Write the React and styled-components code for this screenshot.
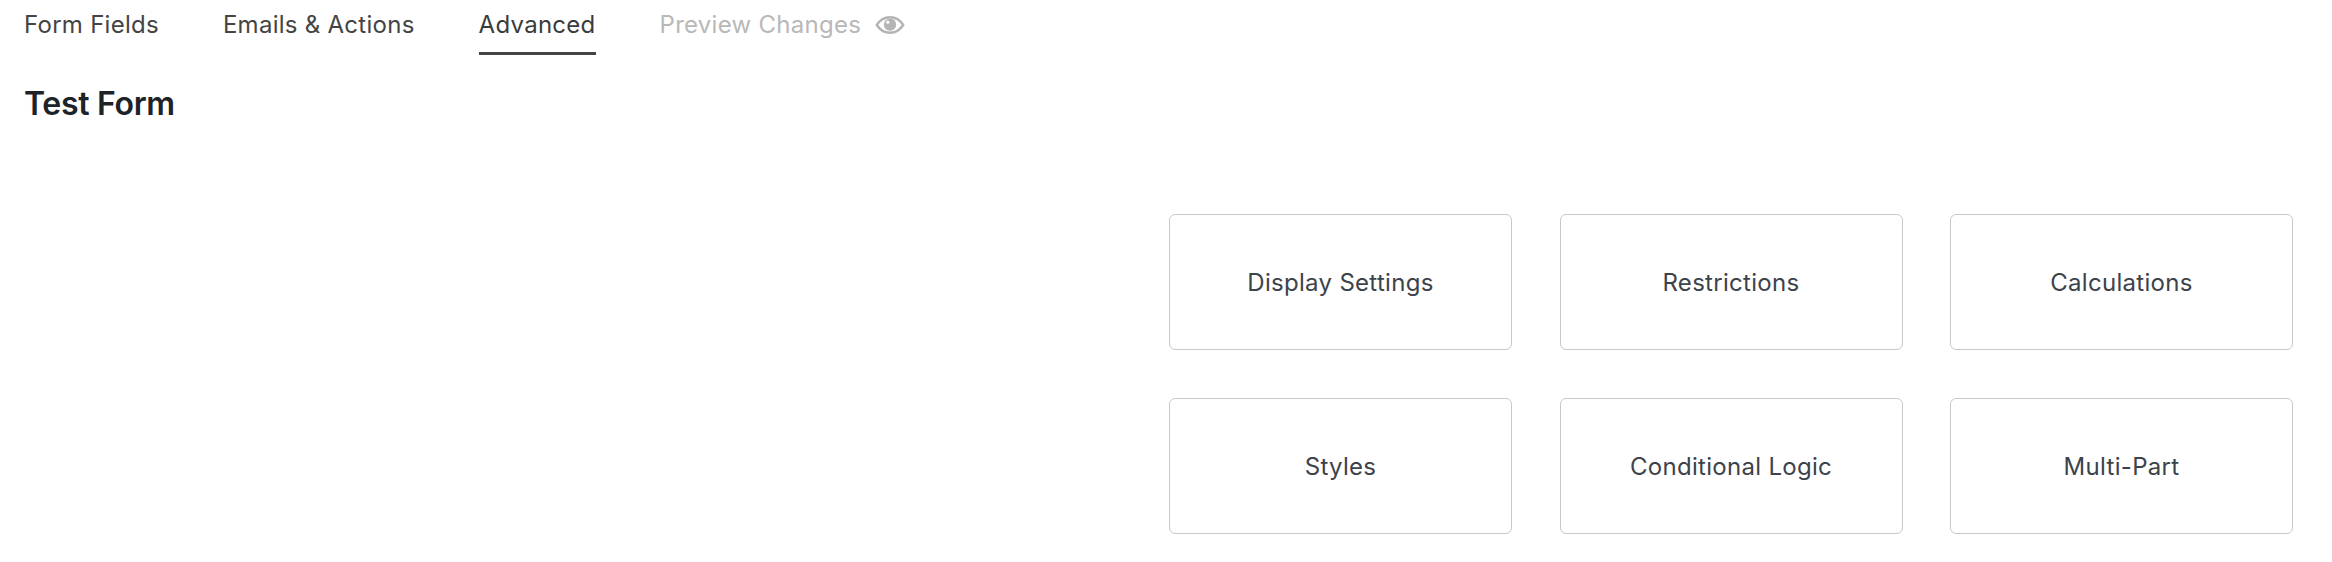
import React from "react";
import styled, { createGlobalStyle } from "styled-components";

const TABS = [
    { label: "Form Fields" },
    { label: "Emails & Actions" },
    { label: "Advanced", active: true },
];

const CARDS = [
    "Display Settings",
    "Restrictions",
    "Calculations",
    "Styles",
    "Conditional Logic",
    "Multi-Part",
];

function EyeIcon(){
    return (
        <svg width="30" height="20" viewBox="0 0 30 20" aria-hidden="true">
            <path
                d="M1.8 10C5 4.9 9.6 2.2 15 2.2S25 4.9 28.2 10C25 15.1 20.4 17.8 15 17.8S5 15.1 1.8 10Z"
                fill="none"
                stroke="#b4b4b4"
                strokeWidth="2.4"
            />
            <circle cx="15" cy="9.6" r="6.2" fill="#b4b4b4" />
            <circle cx="12.8" cy="7.2" r="1.6" fill="#fff" />
        </svg>
    );
}

function App(){
    return (
        <Page>
            <GlobalStyle />
            <Tabs>
                {
                    TABS.map(({ label, active }) => (
                        <Tab key={label} $active={active}>{label}</Tab>
                    ))
                }
                <PreviewTab>
                    Preview Changes
                    <EyeIcon />
                </PreviewTab>
            </Tabs>
            <Title>Test Form</Title>
            <CardGrid>
                {
                    CARDS.map((label) => (
                        <Card key={label}>{label}</Card>
                    ))
                }
            </CardGrid>
        </Page>
    );
}

const GlobalStyle = createGlobalStyle`
    html, body{
        margin: 0;
        padding: 0;
        background-color: #fff;
    }

    body{
        font-family: Inter, "Liberation Sans", sans-serif;
    }
`;

const Page = styled.div`
    box-sizing: border-box;
    width: 2332px;
    height: 562px;
    padding: 0 39px 0 24px;
    overflow: hidden;
`;

const Tabs = styled.nav`
    display: flex;
    align-items: flex-start;
    gap: 64px;
`;

const Tab = styled.a`
    box-sizing: border-box;
    height: 55px;
    padding-top: 9px;
    font-size: 24px;
    line-height: 32px;
    letter-spacing: 0.27px;
    color: ${({ $active }) => ($active ? "#3b3b3b" : "#444")};
    border-bottom: 3px solid ${({ $active }) => ($active ? "#444" : "transparent")};
`;

const PreviewTab = styled(Tab)`
    display: flex;
    align-items: flex-start;
    gap: 14px;
    color: #b8b8b8;

    svg{
        margin-top: 6px;
    }
`;

const Title = styled.h1`
    margin: 29px 0 0;
    font-size: 32px;
    line-height: 40px;
    font-weight: 600;
    letter-spacing: -0.3px;
    color: #1d2327;
`;

const CardGrid = styled.div`
    display: grid;
    grid-template-columns: repeat(3, 343px);
    grid-auto-rows: 136px;
    justify-content: end;
    column-gap: 47.5px;
    row-gap: 48px;
    margin-top: 90px;
`;

const Card = styled.button`
    display: flex;
    align-items: center;
    justify-content: center;
    box-sizing: border-box;
    padding: 0;
    background-color: #fff;
    border: 1px solid #c9c9cc;
    border-radius: 6px;
    font-family: inherit;
    font-size: 24px;
    letter-spacing: 0.3px;
    color: #3c434a;
`;

export default App;
